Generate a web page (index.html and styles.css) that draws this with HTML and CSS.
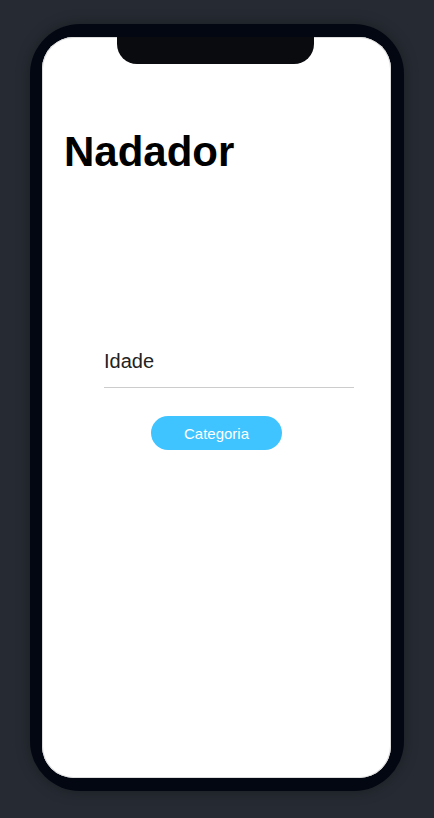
FILE: index.html
```html
<!DOCTYPE html>
<html lang="pt">
<head>
<meta charset="utf-8">
<title>Nadador</title>
<link rel="stylesheet" href="styles.css">
</head>
<body>
  <div class="device">
    <div class="screen">
      <div class="notch"></div>
      <main class="app">
        <h1 class="title">Nadador</h1>
        <div class="form">
          <input class="field" type="text" placeholder="Idade">
          <button class="btn" type="button">Categoria</button>
        </div>
      </main>
    </div>
  </div>
</body>
</html>
```

FILE: styles.css
```css
html, body {
  margin: 0;
  padding: 0;
}

body {
  background: #262b33;
  font-family: "Liberation Sans", Arial, sans-serif;
  min-height: 818px;
}

.device {
  width: 349px;
  height: 741px;
  margin: 24px auto 0;
  padding: 13px 13px 13px 12px;
  background: #030711;
  border-radius: 50px;
  box-shadow: 0 0 14px rgba(0, 0, 0, 0.35);
}

.screen {
  position: relative;
  height: 100%;
  background: #ffffff;
  border-radius: 32px;
  box-shadow: inset 0 0 0 1px #dcdcdc;
  overflow: hidden;
}

.notch {
  position: absolute;
  top: 0;
  left: 75px;
  width: 197px;
  height: 27px;
  background: #0a0b0e;
  border-radius: 0 0 20px 20px;
}

.app {
  display: flex;
  flex-direction: column;
  padding: 91px 0 0 0;
}

.title {
  margin: 0 0 0 22px;
  font-size: 42px;
  line-height: 48px;
  font-weight: 700;
  color: #000;
}

.form {
  display: flex;
  flex-direction: column;
  align-items: center;
  margin-top: 174px;
}

.field {
  width: 250px;
  height: 22px;
  padding: 0 0 15px;
  margin: 0 0 0 25px;
  border: none;
  border-bottom: 1px solid #cccccc;
  outline: none;
  background: transparent;
  font-family: "Liberation Sans", Arial, sans-serif;
  font-size: 20px;
  color: #222;
  box-sizing: content-box;
}

.field::placeholder {
  color: #222;
  opacity: 1;
}

.btn {
  margin-top: 28px;
  width: 131px;
  height: 34px;
  padding: 0;
  border: none;
  border-radius: 17px;
  background: #40c4ff;
  color: #fff;
  font-family: "Liberation Sans", Arial, sans-serif;
  font-size: 15px;
  cursor: pointer;
}
```
